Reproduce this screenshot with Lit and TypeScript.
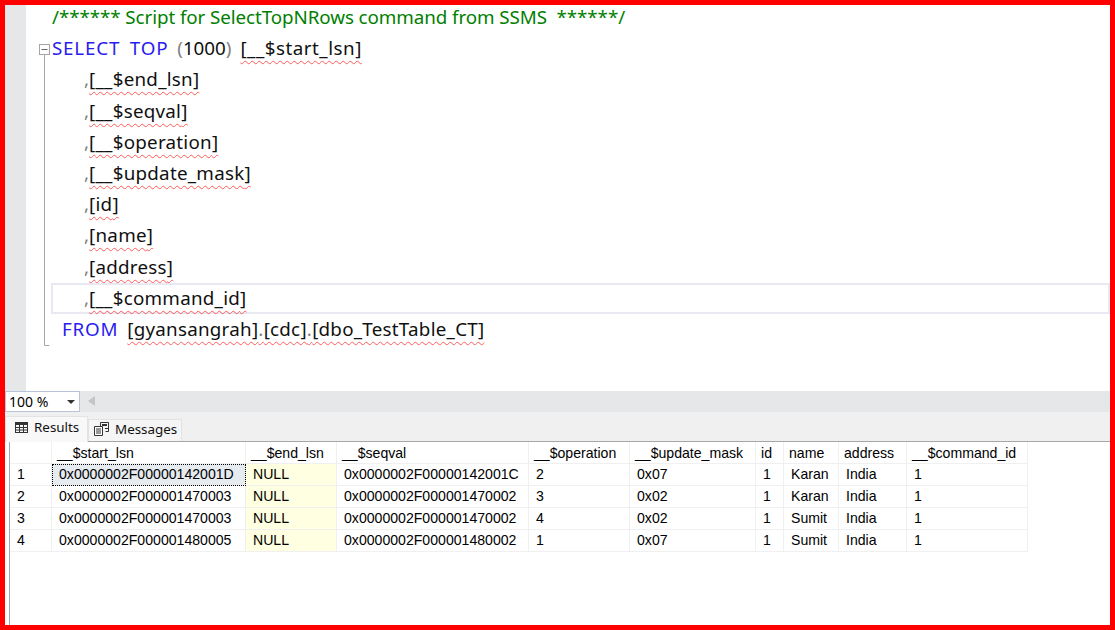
import { LitElement, html, css } from 'lit';
import { customElement } from 'lit/decorators.js';

const columns = ['__$start_lsn', '__$end_lsn', '__$seqval', '__$operation', '__$update_mask', 'id', 'name', 'address', '__$command_id'];

const rows = [
  ['0x0000002F00000142001D', 'NULL', '0x0000002F00000142001C', '2', '0x07', '1', 'Karan', 'India', '1'],
  ['0x0000002F000001470003', 'NULL', '0x0000002F000001470002', '3', '0x02', '1', 'Karan', 'India', '1'],
  ['0x0000002F000001470003', 'NULL', '0x0000002F000001470002', '4', '0x02', '1', 'Sumit', 'India', '1'],
  ['0x0000002F000001480005', 'NULL', '0x0000002F000001480002', '1', '0x07', '1', 'Sumit', 'India', '1'],
];

const fieldNames = ['__$end_lsn', '__$seqval', '__$operation', '__$update_mask', 'id', 'name', 'address', '__$command_id'];

@customElement('app-root')
export class AppRoot extends LitElement {
  static styles = css`
    :host {
      display: flex;
      flex-direction: column;
      box-sizing: border-box;
      width: 1115px;
      height: 630px;
      border: 5px solid #ff0000;
      background: #fff;
      overflow: hidden;
      font-family: "Liberation Sans", Arial, sans-serif;
      color: #000;
    }
    .editor {
      position: relative;
      height: 386px;
      flex: none;
      display: flex;
      overflow: hidden;
    }
    .gutter {
      width: 21px;
      flex: none;
      background: #e6e7e8;
    }
    .code {
      flex: 1;
      margin-top: -3px;
      padding-left: 26px;
      font-family: "Noto Sans", sans-serif;
      font-size: 18.8px;
      color: #101010;
    }
    .line {
      height: 31.2px;
      line-height: 31.2px;
      white-space: pre;
    }
    .field { padding-left: 32px; }
    .from { padding-left: 10px; }
    .spaced { word-spacing: 4px; }
    .current {
      margin-left: -1px;
      padding-left: 33px;
      box-shadow: inset 0 0 0 2px #e9e9f3;
    }
    .comment { color: #008000; letter-spacing: -0.08px; }
    .kw { color: #2a1cf0; letter-spacing: 0.8px; }
    .punct { color: #808080; }
    .bad {
      letter-spacing: 0.25px;
      text-decoration: underline wavy #ff5a5a 1.1px;
      text-decoration-skip-ink: none;
      text-underline-offset: 5px;
    }
    .wide { letter-spacing: 0.5px; }
    .fold {
      position: absolute;
      left: 34px;
      top: 39px;
      width: 11px;
      height: 302px;
      pointer-events: none;
    }
    .statusbar {
      height: 21px;
      flex: none;
      display: flex;
      align-items: stretch;
      background: #e6e7e8;
    }
    .zoom {
      box-sizing: border-box;
      width: 75px;
      display: flex;
      align-items: center;
      justify-content: space-between;
      padding: 0 4px 0 3px;
      background: #fff;
      border: 1px solid #b9c4da;
      font-size: 14px;
      font-family: "Noto Sans", sans-serif;
    }
    .caret {
      width: 0;
      height: 0;
      border-left: 4px solid transparent;
      border-right: 4px solid transparent;
      border-top: 4px solid #333;
    }
    .nudge {
      margin: 5px 0 0 8px;
      width: 0;
      height: 0;
      border-top: 5px solid transparent;
      border-bottom: 5px solid transparent;
      border-right: 7px solid #c4c5c7;
    }
    .tabs {
      box-sizing: border-box;
      height: 30px;
      flex: none;
      display: flex;
      align-items: flex-end;
      background: #f0f0f0;
      border-bottom: 1px solid #a6a6a6;
    }
    .tab {
      box-sizing: border-box;
      display: flex;
      align-items: center;
      background: #f5f5f5;
      border: 1px solid #e3e3e3;
      border-bottom: none;
      font-size: 13.4px;
      font-family: "Noto Sans", sans-serif;
      color: #111;
    }
    .tab.results {
      width: 83px;
      height: 26px;
      margin-bottom: -1px;
      padding: 0 0 5px 9px;
      gap: 6px;
      background: #f8f8f8;
    }
    .tab.messages {
      width: 94px;
      height: 22px;
      padding: 0 0 3px 5px;
      gap: 6px;
    }
    .results-pane {
      flex: 1;
      margin-left: 4px;
      border-left: 1px solid #a6a6a6;
      background: #fff;
    }
    .grid {
      display: grid;
      grid-template-columns: 42px 194px 91px 192px 101px 126px 28px 55px 68px 121px;
      grid-auto-rows: 22px;
      width: max-content;
      font-size: 14.1px;
    }
    .cell {
      box-sizing: border-box;
      display: flex;
      align-items: center;
      padding: 0 0 2px 7px;
      white-space: nowrap;
      border-right: 1px solid #f0f0f0;
      border-bottom: 1px solid #f0f0f0;
    }
    .head { padding: 0 0 0 5px; }
    .active {
      background: #e6ebf0;
      outline: 1px dotted #000;
      outline-offset: -1px;
    }
    .null { background: #ffffe1; }
    svg { display: block; flex: none; }
  `;

  renderCode() {
    return html`
      <div class="line comment">/****** Script for SelectTopNRows command from SSMS  ******/</div>
      <div class="line spaced"><span class="kw">SELECT TOP</span> <span class="punct">(</span>1000<span class="punct">)</span> <span class="bad wide">[__$start_lsn]</span></div>
      ${fieldNames.map(
        (name, i) => html`<div class="line field ${i === fieldNames.length - 1 ? 'current' : ''}"><span class="punct">,</span><span class="bad">[${name}]</span></div>`,
      )}
      <div class="line from spaced"><span class="kw">FROM</span> <span class="bad">[gyansangrah]<span class="punct">.</span>[cdc]<span class="punct">.</span>[dbo_TestTable_CT]</span></div>
    `;
  }

  render() {
    return html`
      <div class="editor">
        <div class="gutter"></div>
        <div class="code">${this.renderCode()}</div>
        <svg class="fold" viewBox="0 0 11 302" width="11" height="302" fill="none" stroke="#a5a5a5">
          <rect x="0.5" y="0.5" width="10" height="10" fill="#fff" />
          <path d="M2.5 5.5h6" stroke="#666" />
          <path d="M5.5 11v290.5h5" />
        </svg>
      </div>
      <div class="statusbar">
        <div class="zoom">100 %<span class="caret"></span></div>
        <div class="nudge"></div>
      </div>
      <div class="tabs">
        <div class="tab results">
          <svg width="13" height="11" viewBox="0 0 13 11" fill="none" stroke="#333">
            <path d="M0 0h13v3H0z" fill="#333" stroke="none" />
            <rect x="0.5" y="0.5" width="12" height="10" />
            <path d="M0 5.5h13M0 8h13M4.5 3v8M8.5 3v8" />
          </svg>
          Results
        </div>
        <div class="tab messages">
          <svg width="15" height="14" viewBox="0 0 15 14" fill="none" stroke="#333">
            <path d="M0.5 4.5h8v9h-8z" fill="#fff" />
            <path d="M2 7h5M2 9h5M2 11h5" />
            <path d="M6.5 4v-3.5h8v9h-3" />
            <path d="M8 2h5v2H8zM11 6h3v1h-3z" fill="#333" stroke="none" />
          </svg>
          Messages
        </div>
      </div>
      <div class="results-pane">
        <div class="grid">
          <div class="cell head"></div>
          ${columns.map((c) => html`<div class="cell head">${c}</div>`)}
          ${rows.map(
            (r, i) => html`
              <div class="cell">${i + 1}</div>
              ${r.map(
                (v, j) => html`<div class="cell ${j === 1 ? 'null' : ''} ${i === 0 && j === 0 ? 'active' : ''}">${v}</div>`,
              )}
            `,
          )}
        </div>
      </div>
    `;
  }
}
